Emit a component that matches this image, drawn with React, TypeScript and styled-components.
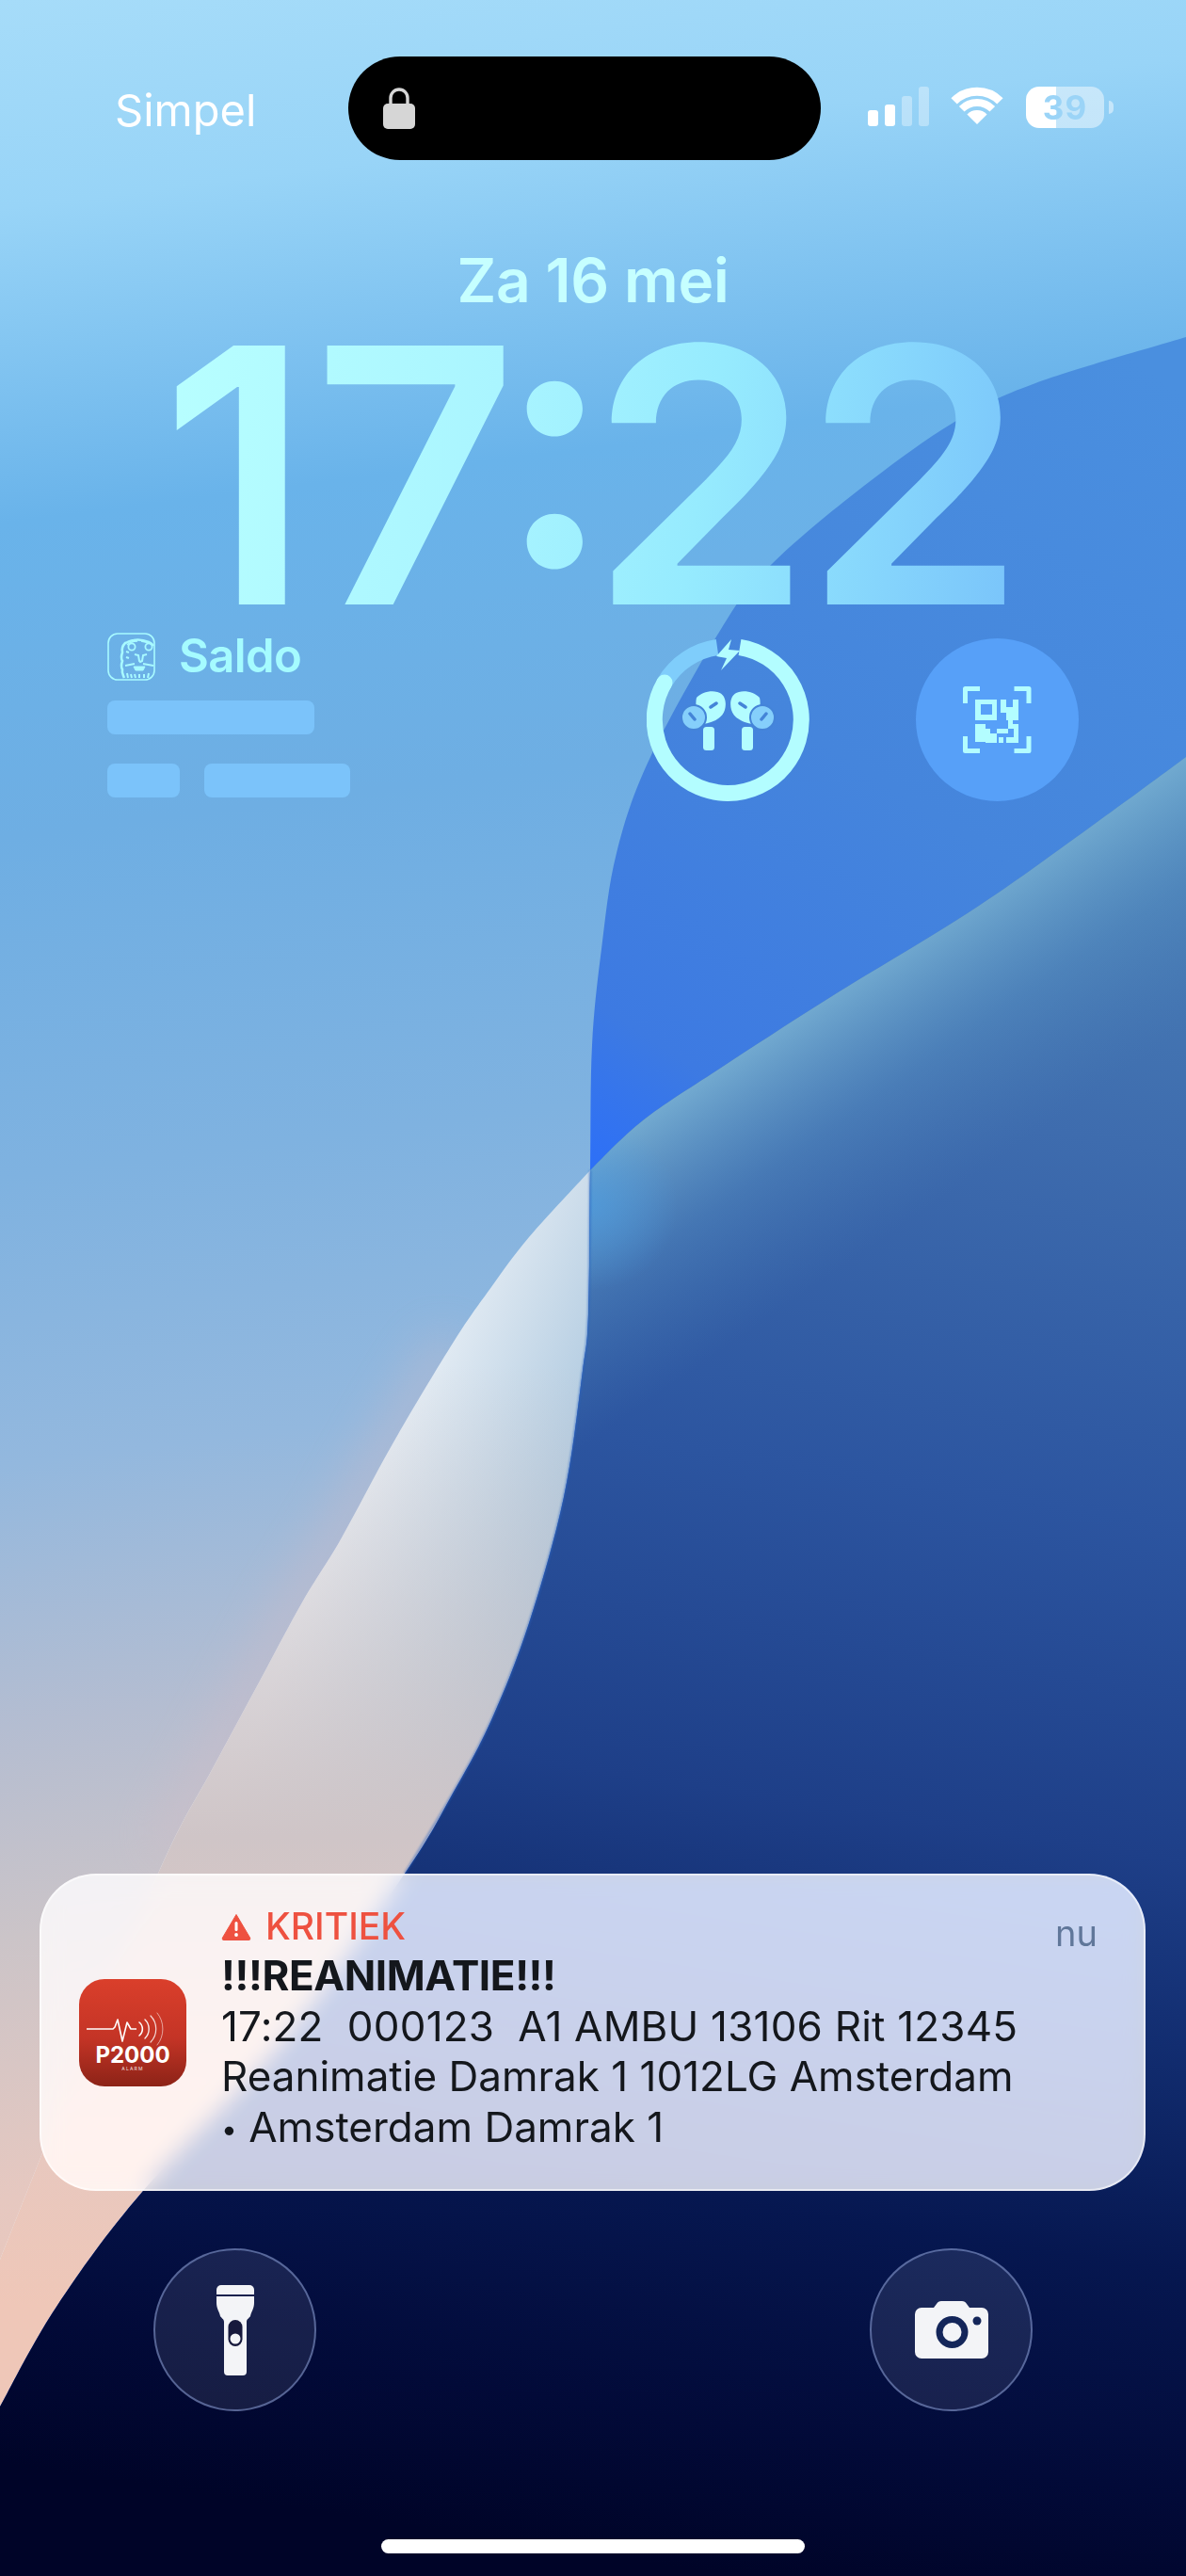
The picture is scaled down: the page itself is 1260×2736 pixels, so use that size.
import styled, { createGlobalStyle } from "styled-components";

const GlobalStyle = createGlobalStyle`
  html, body {
    margin: 0;
    padding: 0;
    background: #000;
  }
`;

type Pt = [number, number];

// smooth line through the points of the wallpaper curves
const smooth = (pts: Pt[]) => {
  let d = `M${pts[0][0]} ${pts[0][1]}`;
  for (let i = 0; i < pts.length - 1; i++) {
    const p0 = pts[i - 1] || pts[i];
    const p1 = pts[i];
    const p2 = pts[i + 1];
    const p3 = pts[i + 2] || p2;
    const c1x = p1[0] + (p2[0] - p0[0]) / 6;
    const c1y = p1[1] + (p2[1] - p0[1]) / 6;
    const c2x = p2[0] - (p3[0] - p1[0]) / 6;
    const c2y = p2[1] - (p3[1] - p1[1]) / 6;
    d += ` C${c1x} ${c1y} ${c2x} ${c2y} ${p2[0]} ${p2[1]}`;
  }
  return d;
};

const upperEdge: Pt[] = [
  [1260, 358], [1100, 407], [1011, 450], [909, 523], [819, 600], [771, 660], [691, 804],
  [655, 906], [639, 1008], [629, 1110], [627, 1243],
];
const lowerEdge: Pt[] = [
  [627, 1243], [625, 1396], [619, 1456], [599, 1590], [562, 1724], [522, 1827], [482, 1903],
  [430, 1990], [300, 2170], [152, 2327], [60, 2450], [0, 2556],
];
const bandEdge: Pt[] = [
  [1260, 804], [1181, 862], [1040, 962], [884, 1058], [763, 1136], [683, 1190], [627, 1243],
];
const wedgeEdge: Pt[] = [
  [627, 1243], [562, 1314], [522, 1367], [482, 1425], [418, 1532], [362, 1635], [321, 1702],
  [273, 1791], [225, 1880], [177, 1970], [100, 2150], [0, 2400],
];

const deepPath = `${smooth([...upperEdge, ...lowerEdge.slice(1)])} L0 2736 L1260 2736 Z`;
const lowerPath = `${smooth(bandEdge)} ${smooth(lowerEdge).replace(/^M\S+ \S+/, "")} L0 2736 L1260 2736 Z`;
const wedgePath = `${smooth(wedgeEdge)} L0 2736 L627 2736 L627 1243 Z`;

const Wallpaper = () => (
  <WallpaperSvg viewBox="0 0 1260 2736">
    <defs>
      <linearGradient id="sky" gradientUnits="userSpaceOnUse" x1="0" y1="0" x2="350" y2="2736">
        <stop offset="0" stopColor="#a6dcf9" />
        <stop offset="0.08" stopColor="#98d4f7" />
        <stop offset="0.2" stopColor="#69b3ea" />
        <stop offset="0.32" stopColor="#6eaee3" />
        <stop offset="0.45" stopColor="#7fb2e0" />
        <stop offset="0.56" stopColor="#93b8de" />
        <stop offset="0.66" stopColor="#b4bdd1" />
        <stop offset="0.74" stopColor="#cbc4c8" />
        <stop offset="0.84" stopColor="#e6c8c0" />
        <stop offset="1" stopColor="#f0c6b6" />
      </linearGradient>
      <linearGradient id="wedge" gradientUnits="userSpaceOnUse" x1="420" y1="1470" x2="640" y2="1560">
        <stop offset="0" stopColor="#eaf0f6" />
        <stop offset="1" stopColor="#a8c5dd" />
      </linearGradient>
      <linearGradient id="wedgeFade" gradientUnits="userSpaceOnUse" x1="0" y1="1450" x2="0" y2="2450">
        <stop offset="0" stopColor="#cfc6c9" stopOpacity="0" />
        <stop offset="0.5" stopColor="#cfc5c7" stopOpacity="1" />
        <stop offset="0.8" stopColor="#e6c8c0" stopOpacity="1" />
        <stop offset="1" stopColor="#efc7b8" stopOpacity="1" />
      </linearGradient>
      <linearGradient id="band" gradientUnits="userSpaceOnUse" x1="1200" y1="380" x2="630" y2="1250">
        <stop offset="0" stopColor="#4a8fdf" />
        <stop offset="0.5" stopColor="#4585dc" />
        <stop offset="0.85" stopColor="#3d7ae2" />
        <stop offset="1" stopColor="#2c6ff8" />
      </linearGradient>
      <linearGradient id="night" gradientUnits="userSpaceOnUse" x1="1080" y1="800" x2="780" y2="2736">
        <stop offset="0" stopColor="#4c82b8" />
        <stop offset="0.2" stopColor="#3e6cae" />
        <stop offset="0.4" stopColor="#2c55a0" />
        <stop offset="0.58" stopColor="#1e3f88" />
        <stop offset="0.68" stopColor="#122d70" />
        <stop offset="0.8" stopColor="#061750" />
        <stop offset="0.92" stopColor="#020a38" />
        <stop offset="1" stopColor="#000428" />
      </linearGradient>
      <linearGradient id="teal" gradientUnits="userSpaceOnUse" x1="925" y1="1015" x2="1070" y2="1225">
        <stop offset="0" stopColor="#7fb8d8" stopOpacity="0.85" />
        <stop offset="0.5" stopColor="#5e9ac8" stopOpacity="0.35" />
        <stop offset="1" stopColor="#4c82b8" stopOpacity="0" />
      </linearGradient>
      <radialGradient id="glow" gradientUnits="userSpaceOnUse" cx="630" cy="1280" r="90">
        <stop offset="0" stopColor="#4c9ade" stopOpacity="0.7" />
        <stop offset="1" stopColor="#4c9ade" stopOpacity="0" />
      </radialGradient>
      <filter id="soft" x="-30%" y="-30%" width="160%" height="160%">
        <feGaussianBlur stdDeviation="26" />
      </filter>
      <filter id="edgeBlur" x="-5%" y="-5%" width="110%" height="110%">
        <feGaussianBlur stdDeviation="1.2" />
      </filter>
    </defs>
    <rect width="1260" height="2736" fill="url(#sky)" />
    <path d={smooth(wedgeEdge.slice(3, 10))} fill="none" stroke="#d6bcc6" strokeWidth="44" opacity="0.4" filter="url(#soft)" />
    <path d={wedgePath} fill="url(#wedge)" />
    <path d={wedgePath} fill="url(#wedgeFade)" />
    <path d={deepPath} fill="url(#band)" />
    <path d={lowerPath} fill="url(#night)" />
    <path d={lowerPath} fill="url(#teal)" />
    <path d={lowerPath} fill="url(#glow)" />
    <path d={smooth(lowerEdge.slice(0, 8))} fill="none" stroke="#2a62c0" strokeWidth="2" opacity="0.6" filter="url(#edgeBlur)" />
  </WallpaperSvg>
);

const WallpaperSvg = styled.svg`
  position: absolute;
  inset: 0;
  width: 1260px;
  height: 2736px;
`;

const Screen = styled.div`
  position: relative;
  width: 1260px;
  height: 2736px;
  overflow: hidden;
  font-family: Inter, "Liberation Sans", sans-serif;
`;

const Content = styled.div`
  position: relative;
  display: flex;
  flex-direction: column;
  height: 100%;
`;

const StatusBar = styled.div`
  display: grid;
  grid-template-columns: 370px 502px 1fr;
  margin-top: 60px;
  height: 110px;
`;

const Carrier = styled.div`
  padding: 29px 0 0 122px;
  font-size: 47px;
  line-height: 56px;
  font-weight: 400;
  color: #fff;
`;

const Island = styled.div`
  display: flex;
  align-items: center;
  padding-left: 37px;
  border-radius: 55px;
  background: #000;
`;

const StatusIcons = styled.div`
  display: flex;
  align-items: flex-start;
  padding: 32px 0 0 50px;
  gap: 22px;
`;

const Battery = styled.div`
  display: flex;
  align-items: center;
  gap: 5px;
  margin-left: 1px;
`;

const BatteryBody = styled.div<{ $level: number }>`
  display: flex;
  align-items: center;
  justify-content: center;
  width: 83px;
  height: 44px;
  border-radius: 14px;
  background: linear-gradient(
    90deg,
    #fff ${({ $level }) => $level}%,
    rgba(255, 255, 255, 0.47) ${({ $level }) => $level}%
  );
  color: #9bd4f7;
  font-size: 35px;
  font-weight: 700;
  letter-spacing: 1px;
`;

const BatteryTail = styled.div`
  width: 5px;
  height: 14px;
  border-radius: 0 5px 5px 0;
  background: rgba(255, 255, 255, 0.47);
`;

const DateLine = styled.div`
  margin-top: 96px;
  text-align: center;
  font-size: 64px;
  line-height: 64px;
  font-weight: 600;
  letter-spacing: -0.2px;
  color: #c6ffff;
`;

const Clock = styled.div`
  margin-top: 24px;
  align-self: center;
  font-size: 378px;
  line-height: 302px;
  font-weight: 600;
  white-space: pre;
  font-feature-settings: "case";
  background: linear-gradient(100deg, #b8ffff 0%, #aaf5ff 38%, #96ebfe 62%, #85d4fc 84%, #78c2fa 100%);
  -webkit-background-clip: text;
  background-clip: text;
  color: transparent;
`;

const ClockGlyph = styled.span<{ $pull: number }>`
  letter-spacing: ${({ $pull }) => $pull}px;
`;

const Widgets = styled.div`
  display: flex;
  margin-top: 16px;
  padding-left: 114px;
`;

const SaldoWidget = styled.div`
  display: flex;
  flex-direction: column;
  width: 572.5px;
`;

const SaldoHead = styled.div`
  display: flex;
  align-items: center;
  gap: 25px;
  height: 50px;
  margin-bottom: 22px;
  font-size: 49px;
  line-height: 48px;
  font-weight: 600;
  letter-spacing: -0.6px;
  color: #a5fbff;
`;

const BarStack = styled.div`
  display: flex;
  flex-direction: column;
  gap: 31px;
`;

const BarRow = styled.div`
  display: flex;
  gap: 26px;
`;

const Placeholder = styled.div<{ $width: number }>`
  width: ${({ $width }) => $width}px;
  height: 36px;
  border-radius: 8px;
  background: #7bc3fa;
`;

const RoundWidget = styled.div<{ $fill?: string }>`
  display: flex;
  align-items: center;
  justify-content: center;
  width: 173px;
  height: 173px;
  flex: 0 0 173px;
  margin: 6px 113.5px 0 0;
  border-radius: 50%;
  background: ${({ $fill }) => $fill || "transparent"};
`;

const Notification = styled.div`
  display: flex;
  box-sizing: border-box;
  width: 1175px;
  height: 337px;
  margin: auto 0 0 42px;
  padding: 28px 49px 0 40px;
  border-radius: 60px;
  border: 2px solid rgba(255, 255, 255, 0.55);
  background: rgba(255, 255, 255, 0.79);
  backdrop-filter: blur(12px) saturate(1.9);
  -webkit-backdrop-filter: blur(12px) saturate(1.9);
`;

const AppIcon = styled.div`
  flex: 0 0 114px;
  width: 114px;
  height: 114px;
  margin: 82px 37px 0 0;
  border-radius: 27px;
  background: linear-gradient(180deg, #da3f2b 0%, #c43426 55%, #8c2317 100%);
`;

const Message = styled.div`
  flex: 1;
  display: flex;
  flex-direction: column;
  color: #14171c;
  font-size: 44px;
  line-height: 53.5px;
  white-space: pre;
`;

const CriticalLabel = styled.div`
  display: flex;
  align-items: center;
  gap: 15px;
  height: 44px;
  margin-top: 4px;
  font-size: 39px;
  font-weight: 500;
  color: #ee5140;
`;

const MessageTitle = styled.div`
  font-weight: 700;
  margin-top: 4px;
  letter-spacing: -0.4px;
`;

const WideLine = styled.div`
  letter-spacing: 0.2px;
`;

const SmallBullet = styled.span`
  font-size: 30px;
  vertical-align: 3px;
`;

const TimeAgo = styled.div`
  margin-top: 11px;
  font-size: 38px;
  line-height: 44px;
  color: #60779a;
`;

const Controls = styled.div`
  display: flex;
  justify-content: space-between;
  margin-top: 61px;
  padding: 0 163px;
`;

const ControlButton = styled.div`
  display: flex;
  align-items: center;
  justify-content: center;
  box-sizing: border-box;
  width: 173px;
  height: 173px;
  border-radius: 50%;
  border: 2px solid rgba(140, 160, 215, 0.55);
  background: rgba(255, 255, 255, 0.085);
`;

const HomeIndicator = styled.div`
  align-self: center;
  width: 450px;
  height: 15px;
  margin: 136px 0 24px;
  border-radius: 8px;
  background: #fff;
`;

const LockIcon = () => (
  <svg width="34" height="44" viewBox="0 0 34 44">
    <path d="M8 20V11a9 9 0 0 1 18 0v9" fill="none" stroke="#d6d6d6" strokeWidth="3.4" />
    <rect x="0" y="17" width="34" height="27" rx="5" fill="#d6d6d6" />
  </svg>
);

const SignalIcon = () => (
  <svg width="65" height="42" viewBox="0 0 65 42">
    <rect x="0" y="25" width="11" height="17" rx="3" fill="#fff" />
    <rect x="18" y="19" width="11" height="23" rx="3" fill="#fff" />
    <rect x="36" y="10" width="11" height="32" rx="3" fill="#fff" fillOpacity="0.35" />
    <rect x="54" y="0" width="11" height="42" rx="3" fill="#fff" fillOpacity="0.35" />
  </svg>
);

const WifiIcon = () => (
  <svg width="58" height="40" viewBox="0 0 58 40">
    <path d="M4.6 15.4a34.5 34.5 0 0 1 48.8 0" fill="none" stroke="#fff" strokeWidth="9" />
    <path d="M12.7 23.7a23 23 0 0 1 32.6 0" fill="none" stroke="#fff" strokeWidth="8" />
    <path d="M29 40L18.4 29.4a15 15 0 0 1 21.2 0z" fill="#fff" />
  </svg>
);

const LionIcon = () => (
  <svg width="51" height="51" viewBox="0 0 51 51" fill="none" stroke="#a8faff">
    <rect x="1" y="1" width="49" height="49" rx="10" strokeWidth="1.6" />
    <path d="M18 48c-1-3-3-5-2-9-2-3-1-6 0-9-2-3-1-6 0-9-1-4 0-7 3-10 4-1 5-3 9-3 5-1 11 0 16 2 2 1 4 2 5 4" strokeWidth="2.6" />
    <path d="M21 13c3-3 7-4 11-4M36 9l9 2" strokeWidth="1.6" />
    <circle cx="26" cy="15" r="3.6" strokeWidth="1.8" />
    <circle cx="44" cy="15" r="3.6" strokeWidth="1.8" />
    <path d="M29 23l4 1 1 6 1 1 2-1 1-6 4-1" strokeWidth="2" />
    <path d="M19 35l10-2M49 35l-11-2" strokeWidth="1.8" />
    <path d="M28 36h12l-2 4h-8z" fill="#a8faff" strokeWidth="1" />
    <path d="M21 43l1 5M25 44l1 4M29 44l1 4M34 44v4M39 44v4M44 43l-1 5M20 26l3 1M20 20l3 1" strokeWidth="2" />
  </svg>
);

const Earbud = () => (
  <g>
    <path d="M53 63c5-5 14-8 22-6 9 2 10 12 8 19-2 8-12 14-24 15-5-5-8-20-6-28z" fill="#b3fdff" />
    <rect x="60" y="94" width="12" height="25" rx="3.500" fill="#b3fdff" />
    <circle cx="50" cy="84" r="13" fill="#85cffb" stroke="#4484d8" strokeWidth="2" />
    <path d="M46 80l5 6M68 73l6-4" stroke="#4484d8" strokeWidth="3.500" strokeLinecap="round" fill="none" />
  </g>
);

const ChargeRing = () => (
  <svg width="173" height="173" viewBox="0 0 173 173">
    <g fill="none" strokeWidth="17">
      <path d="M75 9.500A78 78 0 0 0 19 47" stroke="#7fcdfb" />
      <path d="M19 47A78 78 0 1 0 99 9.500" stroke="#b3fdff" strokeLinecap="butt" />
      <circle cx="19" cy="47" r="8.500" fill="#b3fdff" stroke="none" />
    </g>
    <path d="M90 1L74 19l11 2-6 13 20-21-12-1 3-11z" fill="#b3fdff" />
    <Earbud />
    <g transform="translate(173 0) scale(-1 1)">
      <Earbud />
    </g>
  </svg>
);

const QrIcon = () => (
  <svg width="73" height="72" viewBox="50 50 73 72">
    <path
      d="M68 52.500H52.500V68M104.500 52.500H120V68M68 118.500H52.500V103M104.500 118.500H120V103"
      fill="none"
      stroke="#b3fdff"
      strokeWidth="5"
      strokeLinejoin="round"
    />
    <path
      fillRule="evenodd"
      d="M63 64h23v22H63zM69 69v11h12V69zM90 64h6v8h7v-8h6v22h-6v4h-5v-4h-2v-8h-6zM63 90h11v5h5v5h7v10H74v-1H63zM86 95h12v5H86zM98 90h6v5h-6zM104 90h5v20H96v-6h8zM88 104h5v6h-5z"
      fill="#b3fdff"
    />
  </svg>
);

const P2000Icon = () => (
  <svg width="114" height="114" viewBox="0 0 114 114">
    <path
      d="M8 53H36L38 51 41 43 46 66 51 46 55 53H61"
      fill="none"
      stroke="#fff"
      strokeWidth="1.6"
      strokeLinejoin="round"
    />
    <g fill="none" stroke="#fff" strokeLinecap="round">
      <path d="M64 46a9 9 0 0 1 0 14" strokeWidth="1.6" />
      <path d="M70 43a14 14 0 0 1 0 20" strokeWidth="1.4" opacity="0.9" />
      <path d="M76 39a20 20 0 0 1 0 28" strokeWidth="1.2" opacity="0.8" />
      <path d="M83 36a27 27 0 0 1 0 34" strokeWidth="1" opacity="0.55" />
    </g>
    <text x="57" y="89" textAnchor="middle" fill="#fff" fontSize="24" fontWeight="700" fontFamily="Inter, sans-serif">
      P2000
    </text>
    <text x="57" y="97" textAnchor="middle" fill="#fff" fontSize="5" letterSpacing="1.2" opacity="0.85" fontFamily="Inter, sans-serif">
      ALARM
    </text>
  </svg>
);

const WarningIcon = () => (
  <svg width="32" height="29" viewBox="0 0 32 29">
    <path d="M16 1.500L30.500 26a2 2 0 0 1-1.700 3H3.200a2 2 0 0 1-1.700-3z" fill="#ee5140" stroke="#ee5140" strokeLinejoin="round" strokeWidth="1" />
    <rect x="14.500" y="9" width="3" height="10" rx="1.500" fill="#fff" />
    <circle cx="16" cy="23" r="1.900" fill="#fff" />
  </svg>
);

const TorchIcon = () => (
  <svg width="40" height="96" viewBox="0 0 40 96">
    <path d="M0 5a5 5 0 0 1 5-5h30a5 5 0 0 1 5 5v5H0z" fill="#f3f4f7" />
    <path
      d="M0 12h40v7c0 6-3 9-4 14-1 2-4 3-4 6v53a4 4 0 0 1-4 4h-16a4 4 0 0 1-4-4V39c0-3-3-4-4-6-1-5-4-8-4-14z"
      fill="#f3f4f7"
    />
    <rect x="12.500" y="37" width="15" height="28" rx="7.500" fill="#17193c" />
    <circle cx="20" cy="57" r="5.500" fill="#f3f4f7" />
  </svg>
);

const CameraIcon = () => (
  <svg width="78" height="61" viewBox="0 0 78 61">
    <path
      d="M7 7h13l3-4c1-2 3-3 5-3h22c2 0 4 1 5 3l3 4h13a7 7 0 0 1 7 7v40a7 7 0 0 1-7 7H7a7 7 0 0 1-7-7V14a7 7 0 0 1 7-7z"
      fill="#f3f4f7"
    />
    <circle cx="39.500" cy="33" r="17" fill="#14265a" />
    <circle cx="39.500" cy="33" r="10" fill="#f3f4f7" />
    <circle cx="66" cy="21" r="4.500" fill="#14265a" />
  </svg>
);

const App = () => {
  return (
    <Screen>
      <GlobalStyle />
      <Wallpaper />
      <Content>
        <StatusBar>
          <Carrier>Simpel</Carrier>
          <Island>
            <LockIcon />
          </Island>
          <StatusIcons>
            <SignalIcon />
            <WifiIcon />
            <Battery>
              <BatteryBody $level={39}>39</BatteryBody>
              <BatteryTail />
            </Battery>
          </StatusIcons>
        </StatusBar>

        <DateLine>Za 16 mei</DateLine>
        <Clock>
          <ClockGlyph $pull={2}>1</ClockGlyph>
          <ClockGlyph $pull={-21}>7</ClockGlyph>
          <ClockGlyph $pull={-23}>:</ClockGlyph>
          <ClockGlyph $pull={-8}>2</ClockGlyph>
          <ClockGlyph $pull={0}>2</ClockGlyph>
        </Clock>

        <Widgets>
          <SaldoWidget>
            <SaldoHead>
              <LionIcon />
              Saldo
            </SaldoHead>
            <BarStack>
              <BarRow>
                <Placeholder $width={220} />
              </BarRow>
              <BarRow>
                <Placeholder $width={77} />
                <Placeholder $width={155} />
              </BarRow>
            </BarStack>
          </SaldoWidget>
          <RoundWidget>
            <ChargeRing />
          </RoundWidget>
          <RoundWidget $fill="#57a0f8">
            <QrIcon />
          </RoundWidget>
        </Widgets>

        <Notification>
          <AppIcon>
            <P2000Icon />
          </AppIcon>
          <Message>
            <CriticalLabel>
              <WarningIcon />
              KRITIEK
            </CriticalLabel>
            <MessageTitle>!!!REANIMATIE!!!</MessageTitle>
            <WideLine>17:22  000123  A1 AMBU 13106 Rit 12345</WideLine>
            <div>Reanimatie Damrak 1 1012LG Amsterdam</div>
            <div>
              <SmallBullet>•</SmallBullet> Amsterdam Damrak 1
            </div>
          </Message>
          <TimeAgo>nu</TimeAgo>
        </Notification>

        <Controls>
          <ControlButton>
            <TorchIcon />
          </ControlButton>
          <ControlButton>
            <CameraIcon />
          </ControlButton>
        </Controls>

        <HomeIndicator />
      </Content>
    </Screen>
  );
};

export default App;
